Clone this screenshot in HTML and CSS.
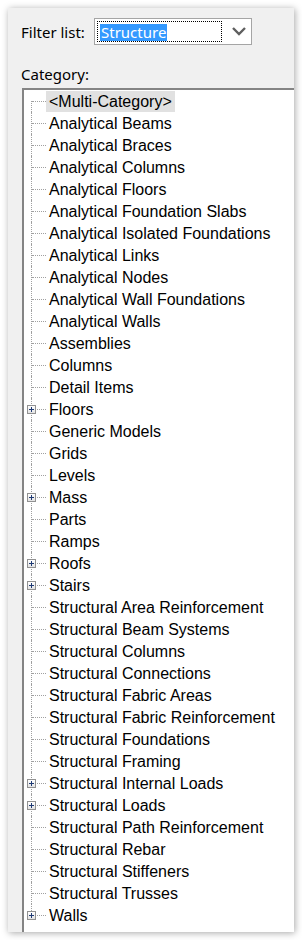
FILE: index.html
```html
<!DOCTYPE html>
<html lang="en">
    <head>
        <meta charset="UTF-8">
        <title>Category Filter</title>
        <link rel="stylesheet" href="styles.css">
    </head>
    <body>
        <div class="panel">
            <div class="filter-row">
                <span class="label">Filter list:</span>
                <div class="combo">
                    <div class="combo-edit"><span class="selected">Structure</span></div>
                    <svg class="chevron" width="14" height="9" viewBox="0 0 14 9">
                        <path d="M1 1 L7 7 L13 1" fill="none" stroke="#5f5f5f" stroke-width="2.4"/>
                    </svg>
                </div>
            </div>
            <div class="label category">Category:</div>
            <ul class="tree">
                <li class="row"><span class="twig"></span><span class="text current">&lt;Multi-Category&gt;</span></li>
                <li class="row"><span class="twig"></span><span class="text">Analytical Beams</span></li>
                <li class="row"><span class="twig"></span><span class="text">Analytical Braces</span></li>
                <li class="row"><span class="twig"></span><span class="text">Analytical Columns</span></li>
                <li class="row"><span class="twig"></span><span class="text">Analytical Floors</span></li>
                <li class="row"><span class="twig"></span><span class="text">Analytical Foundation Slabs</span></li>
                <li class="row"><span class="twig"></span><span class="text">Analytical Isolated Foundations</span></li>
                <li class="row"><span class="twig"></span><span class="text">Analytical Links</span></li>
                <li class="row"><span class="twig"></span><span class="text">Analytical Nodes</span></li>
                <li class="row"><span class="twig"></span><span class="text">Analytical Wall Foundations</span></li>
                <li class="row"><span class="twig"></span><span class="text">Analytical Walls</span></li>
                <li class="row"><span class="twig"></span><span class="text">Assemblies</span></li>
                <li class="row"><span class="twig"></span><span class="text">Columns</span></li>
                <li class="row"><span class="twig"></span><span class="text">Detail Items</span></li>
                <li class="row"><span class="twig"><span class="plus"></span></span><span class="text">Floors</span></li>
                <li class="row"><span class="twig"></span><span class="text">Generic Models</span></li>
                <li class="row"><span class="twig"></span><span class="text">Grids</span></li>
                <li class="row"><span class="twig"></span><span class="text">Levels</span></li>
                <li class="row"><span class="twig"><span class="plus"></span></span><span class="text">Mass</span></li>
                <li class="row"><span class="twig"></span><span class="text">Parts</span></li>
                <li class="row"><span class="twig"></span><span class="text">Ramps</span></li>
                <li class="row"><span class="twig"><span class="plus"></span></span><span class="text">Roofs</span></li>
                <li class="row"><span class="twig"><span class="plus"></span></span><span class="text">Stairs</span></li>
                <li class="row"><span class="twig"></span><span class="text">Structural Area Reinforcement</span></li>
                <li class="row"><span class="twig"></span><span class="text">Structural Beam Systems</span></li>
                <li class="row"><span class="twig"></span><span class="text">Structural Columns</span></li>
                <li class="row"><span class="twig"></span><span class="text">Structural Connections</span></li>
                <li class="row"><span class="twig"></span><span class="text">Structural Fabric Areas</span></li>
                <li class="row"><span class="twig"></span><span class="text">Structural Fabric Reinforcement</span></li>
                <li class="row"><span class="twig"></span><span class="text">Structural Foundations</span></li>
                <li class="row"><span class="twig"></span><span class="text">Structural Framing</span></li>
                <li class="row"><span class="twig"><span class="plus"></span></span><span class="text">Structural Internal Loads</span></li>
                <li class="row"><span class="twig"><span class="plus"></span></span><span class="text">Structural Loads</span></li>
                <li class="row"><span class="twig"></span><span class="text">Structural Path Reinforcement</span></li>
                <li class="row"><span class="twig"></span><span class="text">Structural Rebar</span></li>
                <li class="row"><span class="twig"></span><span class="text">Structural Stiffeners</span></li>
                <li class="row"><span class="twig"></span><span class="text">Structural Trusses</span></li>
                <li class="row last"><span class="twig"><span class="plus"></span></span><span class="text">Walls</span></li>
            </ul>
        </div>
    </body>
</html>
```

FILE: styles.css
```css
body {
    margin: 0;
    padding: 8px;
    background-color: #fff;
}

.panel {
    width: 286px;
    height: 924px;
    box-sizing: border-box;
    background-color: #f0f0f0;
    padding: 10px 0 0 14px;
    display: flex;
    flex-direction: column;
    box-shadow: 1px 1px 7px rgba(0, 0, 0, 0.35);
}

.label {
    font-family: "Noto Sans", "Open Sans", sans-serif;
    font-size: 15px;
    color: #000;
}

.filter-row {
    display: flex;
    align-items: center;
    height: 27px;
}

.filter-row .label {
    width: 73px;
    margin-left: -1px;
}

.combo {
    width: 158px;
    height: 27px;
    box-sizing: border-box;
    border: 1px solid #a5a5a5;
    background-color: #fff;
    display: flex;
    align-items: center;
    padding-left: 2px;
}

.combo-edit {
    width: 125px;
    height: 21px;
    box-sizing: border-box;
    border: 1px dotted #d97a00;
    outline: 1px dotted #000;
    outline-offset: -1px;
    padding: 1px 0 0 2px;
    display: flex;
    align-items: center;
}

.selected {
    background-color: #3399ff;
    color: #fff;
    font-family: "Noto Sans", "Open Sans", sans-serif;
    font-size: 15px;
    line-height: 17px;
    padding: 0 1px;
}

.chevron {
    margin-left: 10px;
}

.category {
    margin: 18px 0 0 -1px;
    height: 22px;
    line-height: 22px;
}

.tree {
    flex: 1;
    list-style: none;
    margin: 3px 0 0 0;
    padding: 0;
    background-color: #fff;
    border-top: 2px solid #848484;
    border-left: 2px solid #848484;
    font-family: "Liberation Sans", Arial, sans-serif;
    font-size: 16px;
    color: #000;
}

.row {
    display: flex;
    align-items: center;
    height: 22px;
}

.twig {
    position: relative;
    width: 22px;
    height: 22px;
    flex: none;
}

.twig::before {
    content: "";
    position: absolute;
    left: 7px;
    top: 0;
    bottom: 0;
    border-left: 1px dotted #a0a0a0;
}

.row:first-child .twig::before {
    top: 11px;
}

.row.last .twig::before {
    bottom: 11px;
}

.twig::after {
    content: "";
    position: absolute;
    left: 8px;
    top: 11px;
    width: 14px;
    border-top: 1px dotted #a0a0a0;
}

.plus {
    position: absolute;
    left: 3px;
    top: 7px;
    width: 9px;
    height: 9px;
    box-sizing: border-box;
    border: 1px solid #919191;
    background: linear-gradient(#fff, #e3e3e3);
    z-index: 1;
}

.plus::before {
    content: "";
    position: absolute;
    left: 1px;
    top: 3px;
    width: 5px;
    height: 1px;
    background-color: #1f3a74;
}

.plus::after {
    content: "";
    position: absolute;
    left: 3px;
    top: 1px;
    width: 1px;
    height: 5px;
    background-color: #1f3a74;
}

.text {
    height: 21px;
    line-height: 21px;
    padding: 0 3px;
    white-space: nowrap;
}

.text.current {
    background-color: #e1e1e1;
}
```
